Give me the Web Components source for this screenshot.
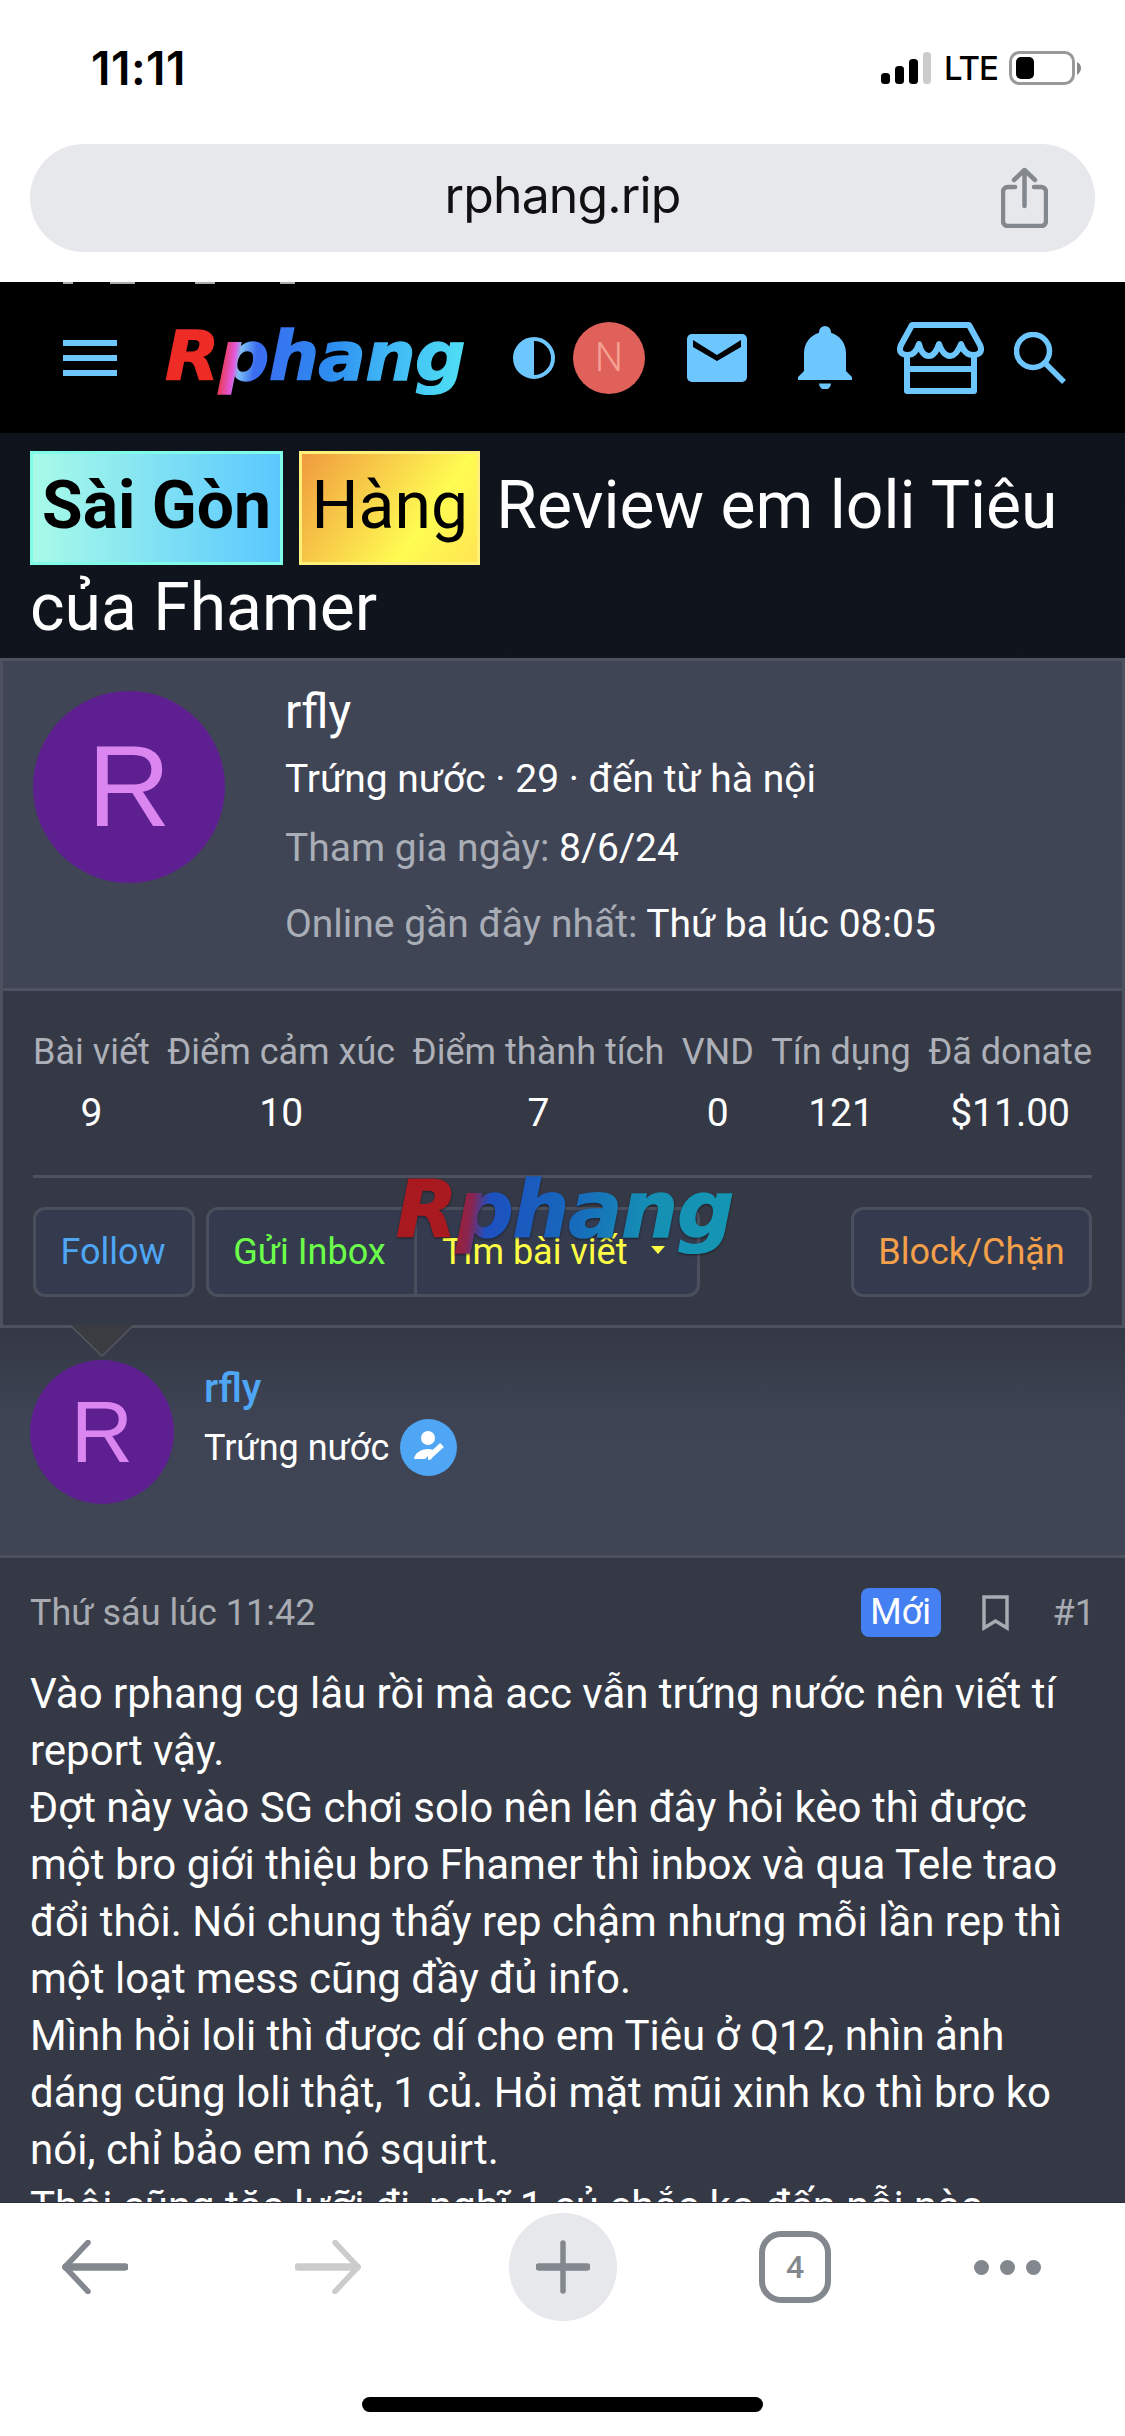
<!DOCTYPE html>
<html lang="vi">
<head>
<meta charset="utf-8">
<title>rphang.rip</title>
<style>
  html, body { margin: 0; padding: 0; background: #fff; }
  body { width: 1125px; height: 2436px; overflow: hidden; font-family: Roboto, "Noto Sans", sans-serif; }
</style>
</head>
<body>
<phone-page>
  <status-bar time="11:11" network="LTE"></status-bar>
  <url-bar>rphang.rip</url-bar>
  <page-area>
    <site-header></site-header>
    <thread-title>
      <title-tag kind="city">Sài Gòn</title-tag> <title-tag kind="goods">Hàng</title-tag> Review em loli Tiêu của Fhamer
    </thread-title>
    <member-card name="rfly" joined="8/6/24" seen="Thứ ba lúc 08:05" info="Trứng nước · 29 · đến từ hà nội">
      <stat-item label="Bài viết" value="9"></stat-item>
      <stat-item label="Điểm cảm xúc" value="10"></stat-item>
      <stat-item label="Điểm thành tích" value="7"></stat-item>
      <stat-item label="VND" value="0"></stat-item>
      <stat-item label="Tín dụng" value="121"></stat-item>
      <stat-item label="Đã donate" value="$11.00"></stat-item>
    </member-card>
    <post-author name="rfly" rank="Trứng nước"></post-author>
    <post-body date="Thứ sáu lúc 11:42" number="#1">
      Vào rphang cg lâu rồi mà acc vẫn trứng nước nên viết tí<br>
      report vậy.<br>
      Đợt này vào SG chơi solo nên lên đây hỏi kèo thì được<br>
      một bro giới thiệu bro Fhamer thì inbox và qua Tele trao<br>
      đổi thôi. Nói chung thấy rep chậm nhưng mỗi lần rep thì<br>
      một loạt mess cũng đầy đủ info.<br>
      Mình hỏi loli thì được dí cho em Tiêu ở Q12, nhìn ảnh<br>
      dáng cũng loli thật, 1 củ. Hỏi mặt mũi xinh ko thì bro ko<br>
      nói, chỉ bảo em nó squirt.<br>
      Thôi cũng tặc lưỡi đi, nghĩ 1 củ chắc ko đến nỗi nào
    </post-body>
  </page-area>
  <browser-toolbar tabs="4"></browser-toolbar>
</phone-page>

<script>
const BLUE = '#6ec6ff';

class PhonePage extends HTMLElement {
  connectedCallback() {
    this.attachShadow({ mode: 'open' });
    this.shadowRoot.innerHTML = `
      <style>
        :host { display: flex; flex-direction: column; width: 1125px; height: 2436px; overflow: hidden; background: #fff; }
      </style>
      <slot></slot>
    `;
  }
}

class StatusBar extends HTMLElement {
  connectedCallback() {
    this.attachShadow({ mode: 'open' });
    this.shadowRoot.innerHTML = `
      <style>
        :host { display: flex; align-items: center; height: 144px; box-sizing: border-box; padding: 0 43px 8px 91px; flex: none; }
        .time { font: 600 46px/1 Inter, "Liberation Sans", sans-serif; color: #000; letter-spacing: .5px; flex: 1; }
        .right { display: flex; align-items: center; }
        .net { font: 500 33px/1 Inter, "Liberation Sans", sans-serif; color: #000; letter-spacing: -1px; margin: 0 11px 0 13px; }
        svg { display: block; }
      </style>
      <div class="time">${this.getAttribute('time')}</div>
      <div class="right">
        <svg width="50" height="32" viewBox="0 0 50 32">
          <rect x="0" y="21" width="9" height="11" rx="3.5" fill="#000"/>
          <rect x="14" y="14" width="9" height="18" rx="3.5" fill="#000"/>
          <rect x="28" y="7" width="9" height="25" rx="3.5" fill="#000"/>
          <rect x="42" y="0" width="8" height="32" rx="3.5" fill="#ccc"/>
        </svg>
        <div class="net">${this.getAttribute('network')}</div>
        <svg width="73" height="34" viewBox="0 0 73 34">
          <rect x="1.5" y="1.5" width="63" height="31" rx="9" fill="none" stroke="#999" stroke-width="3"/>
          <rect x="7" y="6" width="18" height="22" rx="5" fill="#000"/>
          <path d="M68 11 Q72 13 72 17 Q72 21 68 24Z" fill="#888"/>
        </svg>
      </div>
    `;
  }
}

class UrlBar extends HTMLElement {
  connectedCallback() {
    this.attachShadow({ mode: 'open' });
    this.shadowRoot.innerHTML = `
      <style>
        :host { display: block; flex: none; height: 138px; box-sizing: border-box; padding: 0 30px 30px; }
        .bar { position: relative; height: 108px; border-radius: 54px; background: #e7e8ec; display: flex; align-items: center; justify-content: center;
          box-sizing: border-box; padding-bottom: 7px; font: 400 50px/1 Inter, Roboto, sans-serif; color: #111; letter-spacing: -.9px; }
        svg { position: absolute; right: 47px; top: 23px; }
      </style>
      <div class="bar">
        <slot></slot>
        <svg width="47" height="61" viewBox="0 0 47 61" fill="none" stroke="#83888e" stroke-width="4.5" stroke-linecap="round" stroke-linejoin="round">
          <path d="M14 20H7a5 5 0 0 0-5 5V54a5 5 0 0 0 5 5H40a5 5 0 0 0 5-5V25a5 5 0 0 0-5-5H33"/>
          <path d="M23.500 39V3M13 13L23.500 3L34 13"/>
        </svg>
      </div>
    `;
  }
}

class PageArea extends HTMLElement {
  connectedCallback() {
    this.attachShadow({ mode: 'open' });
    this.shadowRoot.innerHTML = `
      <style>
        :host { display: block; flex: 1; min-height: 0; overflow: hidden; background: #353945; color: #fff; font-family: Roboto, "Noto Sans", sans-serif; }
      </style>
      <slot></slot>
    `;
  }
}

class RphangLogo extends HTMLElement {
  connectedCallback() {
    this.attachShadow({ mode: 'open' });
    this.shadowRoot.innerHTML = `
      <style>
        :host { display: inline-block; line-height: 1; }
        span { display: inline-block; font: italic 700 1em/1.1 "DejaVu Sans", sans-serif; transform-origin: left center; transform: scaleX(var(--stretch, 1.04));
          letter-spacing: -.01em; -webkit-text-stroke: .02em transparent;
          background: var(--fill); -webkit-background-clip: text; background-clip: text; color: transparent; }
      </style>
      <span>Rphang</span>
    `;
  }
}

class SiteHeader extends HTMLElement {
  connectedCallback() {
    this.attachShadow({ mode: 'open' });
    this.shadowRoot.innerHTML = `
      <style>
        :host { position: relative; display: flex; align-items: center; flex: none; height: 151px; box-sizing: border-box; background: #000; padding: 0 0 0 63px; }
        :host::before { content: ''; position: absolute; left: 63px; top: 0; width: 240px; height: 2px;
          background: linear-gradient(90deg, #aaa 0 10px, #000 10px 47px, #aaa 47px 72px, #000 72px 132px, #aaa 132px 152px, #000 152px 217px, #aaa 217px 232px, #000 232px); }
        svg { display: block; flex: none; }
        .burger { display: flex; flex-direction: column; gap: 9px; width: 54px; margin-right: 48px; }
        .burger i { display: block; height: 6px; background: ${BLUE}; }
        rphang-logo { width: 297px; margin-right: 51px; font-size: 68px; flex: none;
          --fill: linear-gradient(97deg, #ee2b24 0 17%, #e83a50 20%, #e458dd 24%, #7cc0f5 26%, #3a6cf0 31%, #2d8cf0 55%, #3fb4f5 72%, #50e2f5 100%); }
        .user { width: 72px; height: 72px; border-radius: 50%; background: #e0605a; color: #f4a093; font-size: 40px; font-weight: 300;
          display: flex; align-items: center; justify-content: center; flex: none; margin: 0 42px 0 18px; }
        .mail { margin-right: 51px; }
        .bell { margin-right: 45px; }
        .store { margin-right: 30px; }
      </style>
      <div class="burger"><i></i><i></i><i></i></div>
      <rphang-logo></rphang-logo>
      <svg width="42" height="42" viewBox="0 0 42 42">
        <circle cx="21" cy="21" r="19" fill="none" stroke="${BLUE}" stroke-width="4"/>
        <path d="M21 2A19 19 0 0 0 21 40Z" fill="${BLUE}"/>
      </svg>
      <div class="user">N</div>
      <svg class="mail" width="60" height="48" viewBox="0 0 60 48">
        <rect width="60" height="48" rx="5" fill="${BLUE}"/>
        <path d="M6 6L30 21L54 6V13L30 27L6 13Z" fill="#000"/>
      </svg>
      <svg class="bell" width="54" height="63" viewBox="3 2 18 21">
        <path fill="${BLUE}" d="M21 19V20H3V19L5 17V11C5 7.900 7.030 5.170 10 4.290C10 4.190 10 4.100 10 4A2 2 0 0 1 14 4C14 4.100 14 4.190 14 4.290C16.970 5.170 19 7.900 19 11V17L21 19M14 21.200A2 2 0 0 1 10 21.200Z"/>
      </svg>
      <svg class="store" width="87" height="72" viewBox="0 0 87 72" fill="none" stroke="${BLUE}" stroke-width="6" stroke-linejoin="round">
        <path d="M15 3H72L83 23C86 30 82 33 76 33C70 33 66 28 64 22C61 30 58 34 53 34C48 34 44 28 42 22C40 28 37 34 32 34C27 34 24 30 22 22C20 28 17 33 11 33C5 33 1 30 4 23Z"/>
        <path d="M10 34V69H77V34M10 47H77"/>
      </svg>
      <svg width="52" height="52" viewBox="0 0 52 52" fill="none" stroke="${BLUE}" stroke-width="5.500">
        <circle cx="19" cy="19" r="16.500"/>
        <path d="M31 31L50 50"/>
      </svg>
    `;
  }
}

class ThreadTitle extends HTMLElement {
  connectedCallback() {
    this.attachShadow({ mode: 'open' });
    this.shadowRoot.innerHTML = `
      <style>
        :host { display: block; box-sizing: border-box; height: 225px; padding: 22px 30px 0; background: linear-gradient(#0f131c, #10141d);
          font-size: 66px; line-height: 102px; color: #fff; }
      </style>
      <slot></slot>
    `;
  }
}

// no whitespace around the slot: the host is inline, a stray space would widen the box
class TitleTag extends HTMLElement {
  connectedCallback() {
    this.attachShadow({ mode: 'open' });
    this.shadowRoot.innerHTML = `<style>
        :host { display: inline; color: #000; padding: 13px 9px 18px; border: 3px solid; }
        :host([kind="city"]) { font-weight: 700; background: linear-gradient(90deg, #a8fbe8, #5ac8ff); border-color: #7ffbe8; }
        :host([kind="goods"]) { background: linear-gradient(125deg, #f09a3e, #fffc52 68%, #ffe552); border-color: #fff07a; }
      </style><slot></slot>`;
  }
}

class LetterAvatar extends HTMLElement {
  connectedCallback() {
    this.attachShadow({ mode: 'open' });
    this.shadowRoot.innerHTML = `
      <style>
        :host { display: flex; align-items: center; justify-content: center; flex: none; width: var(--size); height: var(--size); border-radius: 50%;
          background: #5e2090; color: #da85f0; font: 400 calc(var(--size) * .6)/1 "Liberation Sans", sans-serif; }
      </style>
      <slot></slot>
    `;
  }
}

class StatItem extends HTMLElement {
  connectedCallback() {
    this.attachShadow({ mode: 'open' });
    this.shadowRoot.innerHTML = `
      <style>
        :host { display: flex; flex-direction: column; align-items: center; gap: 18px; }
        .label { font-size: 36px; line-height: 42px; color: #adb0b8; white-space: nowrap; }
        .value { font-size: 39px; line-height: 44px; color: #fff; }
      </style>
      <div class="label">${this.getAttribute('label')}</div>
      <div class="value">${this.getAttribute('value')}</div>
    `;
  }
}

class CardButton extends HTMLElement {
  connectedCallback() {
    this.attachShadow({ mode: 'open' });
    this.shadowRoot.innerHTML = `
      <style>
        :host { display: flex; align-items: center; justify-content: center; box-sizing: border-box; height: 90px; background: #343b4f;
          font-size: 36px; white-space: nowrap; border: 3px solid #4a4f5e; border-radius: 12px; color: var(--c); }
        :host([joined="left"]) { border-radius: 12px 0 0 12px; }
        :host([joined="right"]) { border-radius: 0 12px 12px 0; border-left: 0; }
        .caret { width: 0; height: 0; border: 7px solid transparent; border-top: 8px solid var(--c); border-bottom: 0; margin-left: 24px; margin-top: -4px; }
      </style>
      <slot></slot>
      ${this.hasAttribute('menu') ? '<div class="caret"></div>' : ''}
    `;
  }
}

class MemberCard extends HTMLElement {
  connectedCallback() {
    this.attachShadow({ mode: 'open' });
    this.shadowRoot.innerHTML = `
      <style>
        :host { display: block; position: relative; box-sizing: border-box; height: 670px; border: 3px solid #4e5260; background: #353945; }
        .top { display: flex; box-sizing: border-box; height: 330px; padding: 30px 30px 0; background: #3f4555; border-bottom: 3px solid #4e5260; }
        letter-avatar { --size: 192px; margin-right: 60px; }
        .name { font-size: 48px; line-height: 56px; margin-top: -7px; }
        .line { font-size: 39px; line-height: 46px; white-space: nowrap; }
        .info { margin-top: 16px; }
        .joined { margin-top: 23px; }
        .seen { margin-top: 30px; }
        .muted { color: #a9adb5; }
        .stats { display: flex; justify-content: space-between; margin: 0 30px; padding: 40px 0 40px; height: 104px; border-bottom: 3px solid #4e5260; box-sizing: content-box; }
        .actions { display: flex; margin: 29px 30px 0; }
        .follow { width: 162px; margin-right: 11px; padding-right: 2px; --c: #4ea6f5; }
        .inbox { width: 211px; padding-right: 4px; --c: #6cff4a; }
        .find { width: 283px; --c: #ffff44; justify-content: flex-start; padding-left: 25px; }
        .block { width: 241px; margin-left: auto; --c: #f5a04a; }
        rphang-logo { position: absolute; left: 393px; top: 507px; font-size: 78px; z-index: 1; --stretch: 1.02; filter: drop-shadow(0 1px 1px rgba(0,0,0,.5));
          --fill: linear-gradient(97deg, #a81a20 0 17%, #8a2550 23%, #1d50c0 28%, #1766bd 50%, #1590b4 75%, #1596b4 100%); }
        svg { position: absolute; left: 67px; top: 664px; }
      </style>
      <div class="top">
        <letter-avatar>R</letter-avatar>
        <div>
          <div class="name">${this.getAttribute('name')}</div>
          <div class="line info">${this.getAttribute('info')}</div>
          <div class="line joined"><span class="muted">Tham gia ngày:</span> ${this.getAttribute('joined')}</div>
          <div class="line seen"><span class="muted">Online gần đây nhất:</span> ${this.getAttribute('seen')}</div>
        </div>
      </div>
      <div class="stats"><slot></slot></div>
      <div class="actions">
        <card-button class="follow">Follow</card-button>
        <card-button class="inbox" joined="left">Gửi Inbox</card-button>
        <card-button class="find" joined="right" menu>Tìm bài viết</card-button>
        <card-button class="block">Block/Chặn</card-button>
      </div>
      <rphang-logo></rphang-logo>
      <svg width="64" height="32" viewBox="0 0 64 32"><path d="M0 0H64L32 31Z" fill="#3b3c42"/><path d="M0 0L32 31L64 0" fill="none" stroke="#55585f" stroke-width="1.500"/></svg>
    `;
  }
}

class PostAuthor extends HTMLElement {
  connectedCallback() {
    this.attachShadow({ mode: 'open' });
    this.shadowRoot.innerHTML = `
      <style>
        :host { display: flex; box-sizing: border-box; height: 230px; padding: 32px 30px 0; border-bottom: 3px solid #4e5260;
          background: linear-gradient(#343845, #3e4454 90px, #3f4555); }
        letter-avatar { --size: 144px; margin-right: 30px; }
        .name { font-size: 40px; line-height: 47px; font-weight: 500; color: #4ea6f5; margin-top: 5px; }
        .rank { display: flex; align-items: center; gap: 11px; margin-top: 7px; font-size: 36px; }
        svg { display: block; }
      </style>
      <letter-avatar>R</letter-avatar>
      <div>
        <div class="name">${this.getAttribute('name')}</div>
        <div class="rank">${this.getAttribute('rank')}
          <svg width="57" height="57" viewBox="0 0 57 57">
            <circle cx="28.500" cy="28.500" r="28.500" fill="#4ea6f5"/>
            <circle cx="28" cy="19" r="7" fill="#fff"/>
            <path d="M14 40C15 33 22 30 29 30L34 31L25 40Z" fill="#fff"/>
            <path d="M29 38L42 26" stroke="#fff" stroke-width="5.500"/>
            <path d="M28 36L32 40L28 41Z" fill="#fff"/>
          </svg>
        </div>
      </div>
    `;
  }
}

class PostBody extends HTMLElement {
  connectedCallback() {
    this.attachShadow({ mode: 'open' });
    this.shadowRoot.innerHTML = `
      <style>
        :host { display: block; background: #353945; padding: 30px 30px 0; }
        .head { display: flex; align-items: center; height: 49px; font-size: 36px; color: #a8abb1; }
        .date { flex: 1; }
        .new { box-sizing: border-box; width: 80px; height: 49px; line-height: 49px; text-align: center; background: #4580f2; color: #fff; border-radius: 8px; margin-right: 41px; }
        svg { margin-right: 44px; display: block; }
        .text { margin-top: 28px; font-size: 42px; line-height: 57px; color: #fff; white-space: nowrap; }
      </style>
      <div class="head">
        <div class="date">${this.getAttribute('date')}</div>
        <div class="new">Mới</div>
        <svg width="27" height="36" viewBox="0 0 27 36"><path d="M2 2H25V33L13.500 26L2 33Z" fill="none" stroke="#a8abb1" stroke-width="3.500"/></svg>
        <div>${this.getAttribute('number')}</div>
      </div>
      <div class="text"><slot></slot></div>
    `;
  }
}

class BrowserToolbar extends HTMLElement {
  connectedCallback() {
    this.attachShadow({ mode: 'open' });
    this.shadowRoot.innerHTML = `
      <style>
        :host { display: block; flex: none; height: 234px; box-sizing: border-box; background: #fff; border-top: 1px solid #2a2d35; position: relative; }
        .row { display: flex; align-items: center; height: 108px; margin-top: 10px; padding-left: 62px; }
        svg { display: block; flex: none; }
        .fwd { margin: 0 148px 0 167px; }
        .plus { width: 108px; height: 108px; border-radius: 50%; background: #e7e8ec; display: flex; align-items: center; justify-content: center; flex: none; }
        .tabs { box-sizing: border-box; width: 72px; height: 72px; border: 6px solid #83888e; border-radius: 22px; margin: 0 143px 0 142px; flex: none;
          display: flex; align-items: center; justify-content: center; font: 500 32px/1 Roboto, sans-serif; color: #83888e; }
        .dots { display: flex; gap: 11px; margin-left: 0; }
        .dots i { width: 15px; height: 15px; border-radius: 50%; background: #83888e; }
        .home { position: absolute; left: 362px; top: 194px; width: 401px; height: 15px; border-radius: 8px; background: #000; }
      </style>
      <div class="row">
        <svg width="66" height="54" viewBox="0 0 66 54" fill="none" stroke="#83888e" stroke-linecap="round" stroke-linejoin="round">
          <path d="M4 27H63" stroke-width="7.500"/><path d="M26 2.500L3 27L26 51.500" stroke-width="5.500"/>
        </svg>
        <svg class="fwd" width="66" height="54" viewBox="0 0 66 54" fill="none" stroke="#ccc" stroke-linecap="round" stroke-linejoin="round">
          <path d="M62 27H3" stroke-width="7.500"/><path d="M40 2.500L63 27L40 51.500" stroke-width="5.500"/>
        </svg>
        <div class="plus">
          <svg width="54" height="54" viewBox="0 0 54 54" fill="none" stroke="#83888e" stroke-linecap="round">
            <path d="M3 27H51" stroke-width="7.500"/><path d="M27 3V51" stroke-width="5.500"/>
          </svg>
        </div>
        <div class="tabs">${this.getAttribute('tabs')}</div>
        <div class="dots"><i></i><i></i><i></i></div>
      </div>
      <div class="home"></div>
    `;
  }
}

customElements.define('phone-page', PhonePage);
customElements.define('status-bar', StatusBar);
customElements.define('url-bar', UrlBar);
customElements.define('page-area', PageArea);
customElements.define('rphang-logo', RphangLogo);
customElements.define('site-header', SiteHeader);
customElements.define('thread-title', ThreadTitle);
customElements.define('title-tag', TitleTag);
customElements.define('letter-avatar', LetterAvatar);
customElements.define('stat-item', StatItem);
customElements.define('card-button', CardButton);
customElements.define('member-card', MemberCard);
customElements.define('post-author', PostAuthor);
customElements.define('post-body', PostBody);
customElements.define('browser-toolbar', BrowserToolbar);
</script>
</body>
</html>
